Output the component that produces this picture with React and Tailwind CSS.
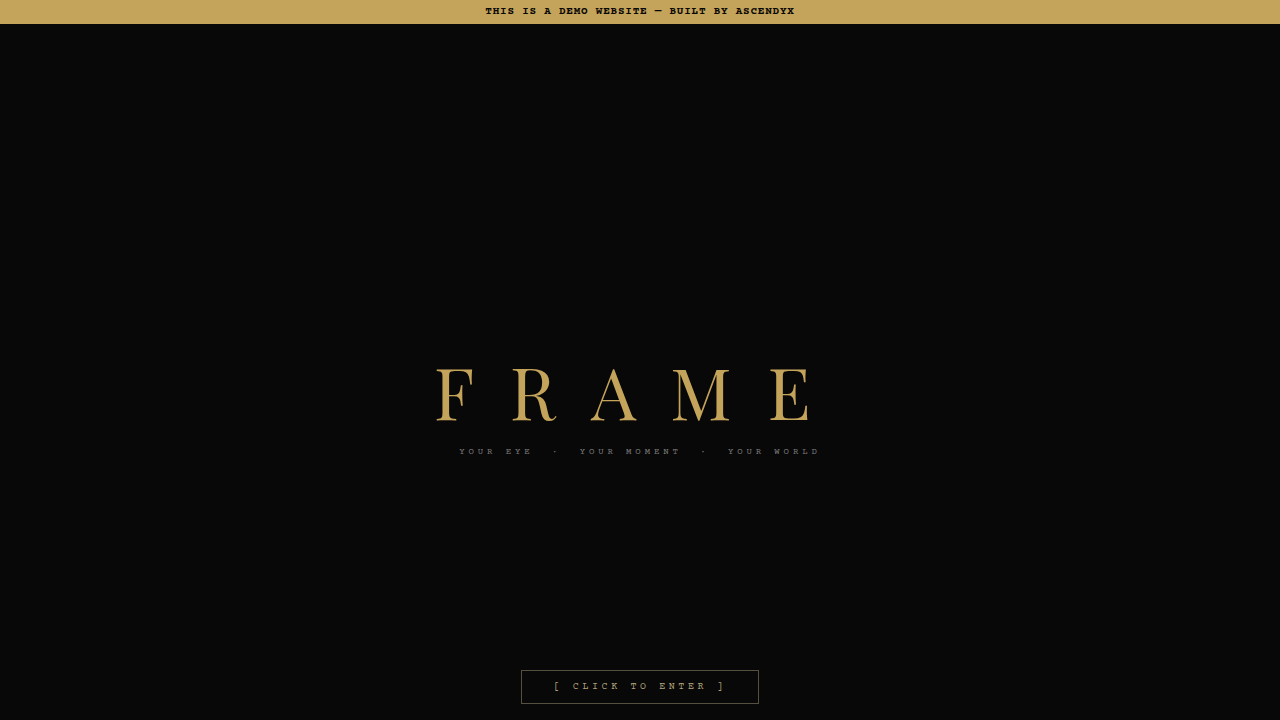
export default function App() {
  return (
    <div className="flex min-h-screen flex-col bg-[#080808] font-['Courier_Prime','Liberation_Mono',monospace]">
      <header className="bg-[#c4a35a] px-4 py-1 text-center text-[11px] leading-4 font-bold tracking-[0.07em] text-[#0a0806] uppercase">
        This is a demo website — Built by Ascendyx
      </header>

      <main className="flex flex-1 flex-col items-center pb-4">
        <section className="flex flex-1 flex-col items-center justify-center pt-30 text-center">
          <h1 className="font-['Playfair_Display','Liberation_Serif',serif] text-[71px] leading-none tracking-[0.5em] text-[#c4a35a]">
            FRAME
          </h1>
          <p className="mt-4.5 text-[9px] leading-4 tracking-[0.43em] text-[#7c7c7c] uppercase">
            Your eye &nbsp;·&nbsp; Your moment &nbsp;·&nbsp; Your world
          </p>
        </section>

        <button
          type="button"
          className="cursor-pointer border border-[#56513f] px-8 py-2 text-[10px] leading-4 tracking-[0.36em] text-[#b0a37c] uppercase"
        >
          [ Click to enter ]
        </button>
      </main>
    </div>
  );
}
